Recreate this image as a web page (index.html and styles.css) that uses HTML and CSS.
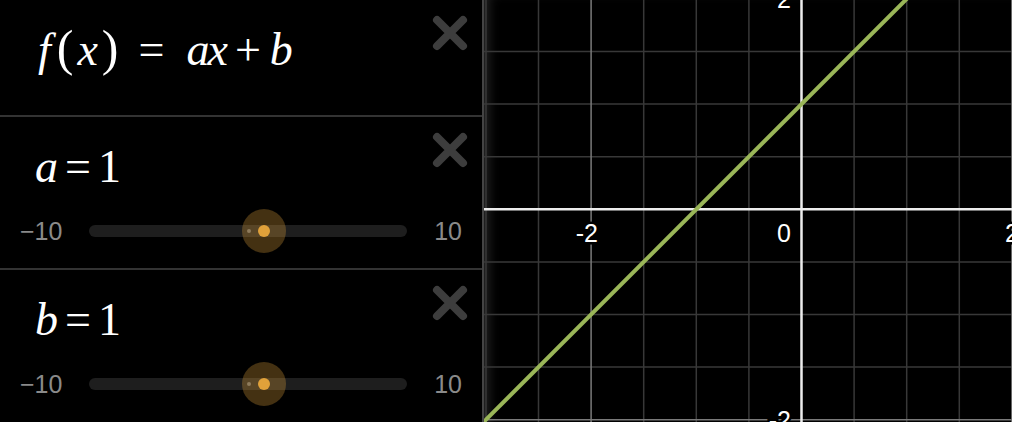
FILE: index.html
```html
<!DOCTYPE html>
<html lang="en">
<head>
    <meta charset="UTF-8" />
    <title>Graph - f(x) = ax + b</title>

    <link rel="stylesheet" href="styles.css">
</head>
<body>
<div class="app">
    <div class="list">
        <div class="expr">
            <div class="math"><i class="f">f</i><span class="paren">(</span><i class="arg">x</i><span class="paren">)</span><span class="rel wide">=</span><i class="tight">a</i><i>x</i><span class="bin">+</span><i>b</i></div>
            <button class="remove" aria-label="Delete"><svg viewBox="0 0 36 36"><path d="M5 5 L31 31 M31 5 L5 31" /></svg></button>
        </div>

        <div class="expr">
            <div class="math"><i>a</i><span class="rel">=</span><span>1</span></div>
            <button class="remove" aria-label="Delete"><svg viewBox="0 0 36 36"><path d="M5 5 L31 31 M31 5 L5 31" /></svg></button>
            <div class="slider">
                <span class="bound">&minus;10</span>
                <div class="track">
                    <span class="zero"></span>
                    <span class="thumb" style="left: 55%"></span>
                </div>
                <span class="bound">10</span>
            </div>
        </div>

        <div class="expr">
            <div class="math"><i>b</i><span class="rel">=</span><span>1</span></div>
            <button class="remove" aria-label="Delete"><svg viewBox="0 0 36 36"><path d="M5 5 L31 31 M31 5 L5 31" /></svg></button>
            <div class="slider">
                <span class="bound">&minus;10</span>
                <div class="track">
                    <span class="zero"></span>
                    <span class="thumb" style="left: 55%"></span>
                </div>
                <span class="bound">10</span>
            </div>
        </div>
    </div>

    <div class="graph">
        <svg viewBox="0 0 528 422" width="528" height="422">
            <!-- minor grid, every 0.5 -->
            <g class="minor">
                <line x1="2" y1="0" x2="2" y2="422" />
                <line x1="54.5" y1="0" x2="54.5" y2="422" />
                <line x1="159.7" y1="0" x2="159.7" y2="422" />
                <line x1="212.3" y1="0" x2="212.3" y2="422" />
                <line x1="264.9" y1="0" x2="264.9" y2="422" />
                <line x1="370.1" y1="0" x2="370.1" y2="422" />
                <line x1="422.7" y1="0" x2="422.7" y2="422" />
                <line x1="475.3" y1="0" x2="475.3" y2="422" />
                <line x1="0" y1="51.5" x2="528" y2="51.5" />
                <line x1="0" y1="104.1" x2="528" y2="104.1" />
                <line x1="0" y1="156.7" x2="528" y2="156.7" />
                <line x1="0" y1="261.9" x2="528" y2="261.9" />
                <line x1="0" y1="314.5" x2="528" y2="314.5" />
                <line x1="0" y1="367.1" x2="528" y2="367.1" />
            </g>
            <!-- major grid, every 2 -->
            <g class="major">
                <line x1="107.1" y1="0" x2="107.1" y2="422" />
                <line x1="527.9" y1="0" x2="527.9" y2="422" />
                <line x1="0" y1="419.7" x2="528" y2="419.7" />
            </g>
            <g class="axis">
                <line x1="0" y1="209.3" x2="528" y2="209.3" />
                <line x1="317.5" y1="0" x2="317.5" y2="422" />
            </g>
            <line class="plot" x1="-10" y1="431.6" x2="431.6" y2="-10" />
            <g class="ticks">
                <text x="114" y="242" text-anchor="end">-2</text>
                <text x="307" y="242" text-anchor="end">0</text>
                <text x="527.9" y="242" text-anchor="middle">2</text>
                <text x="307" y="7.5" text-anchor="end">2</text>
                <text x="307" y="428.5" text-anchor="end">-2</text>
            </g>
        </svg>
    </div>
</div>
</body>
</html>
```

FILE: styles.css
```css
html, body {
    margin: 0;
    background: #000;
}

body {
    font-family: "Liberation Sans", Arial, sans-serif;
    color: #fff;
    overflow: hidden;
}

.app {
    display: flex;
    height: 422px;
}

/* expression list */
.list {
    width: 482px;
    flex: none;
    border-right: 2px solid #444;
}

.expr {
    display: grid;
    grid-template-columns: 1fr 50px;
    align-items: start;
    align-content: start;
    border-bottom: 2px solid #333;
    height: 115px;
}
.expr + .expr {
    height: 151px;
}
.expr:last-child {
    border-bottom: none;
}

.math {
    font-family: "Liberation Serif", "DejaVu Serif", serif;
    font-size: 46px;
    line-height: 1;
    margin-top: 27px;
    padding-left: 35px;
    white-space: nowrap;
}
.math i {
    font-style: italic;
}
.math .f {
    margin: 0 6px 0 3px;
}
.math .paren {
    font-size: 50px;
    line-height: 0;
}
.math .arg {
    margin: 0 4px;
}
.math .rel {
    margin: 0 7px;
}
.math .rel.wide {
    margin: 0 22px 0 20px;
}
.math .tight {
    margin-right: -2px;
}
.math .bin {
    margin: 0 9px 0 7px;
}

.remove {
    width: 36px;
    height: 36px;
    margin: 15px 14px 0 0;
    padding: 0;
    border: none;
    background: none;
}
.remove svg {
    display: block;
    width: 36px;
    height: 36px;
}
.remove path {
    fill: none;
    stroke: #3d3d3d;
    stroke-width: 8;
    stroke-linecap: round;
}

/* slider */
.slider {
    grid-column: 1 / -1;
    display: flex;
    align-items: center;
    gap: 27px;
    height: 24px;
    margin-top: 29px;
    padding: 0 20px;
}
.bound {
    font-size: 25px;
    line-height: 24px;
    color: #8a8a8a;
}
.track {
    flex: 1;
    position: relative;
    height: 12px;
    border-radius: 6px;
    background: #1e1e1e;
}
.zero {
    position: absolute;
    left: 50%;
    top: 4px;
    width: 4px;
    height: 4px;
    margin-left: -1px;
    border-radius: 50%;
    background: #6b6b6b;
}
.thumb {
    position: absolute;
    top: 6px;
    width: 44px;
    height: 44px;
    margin: -22px 0 0 -22px;
    border-radius: 50%;
    background: rgba(224, 161, 58, 0.3);
}
.thumb::after {
    content: "";
    position: absolute;
    left: 16px;
    top: 16px;
    width: 12px;
    height: 12px;
    border-radius: 50%;
    background: #e0a13a;
}

/* graph paper */
.graph {
    flex: 1;
    position: relative;
    overflow: hidden;
    box-shadow: inset 12px 0 12px -8px #2a2a2a;
}
.graph svg {
    display: block;
}
.minor line {
    stroke: #383838;
    stroke-width: 1.5;
}
.major line {
    stroke: #7a7a7a;
    stroke-width: 1.5;
}
.axis line {
    stroke: #ececec;
    stroke-width: 2.5;
}
.plot {
    stroke: #9ab658;
    stroke-width: 4;
}
.ticks text {
    font-family: "Liberation Sans", Arial, sans-serif;
    font-size: 25px;
    fill: #fff;
    stroke: #000;
    stroke-width: 5px;
    paint-order: stroke;
}
```
